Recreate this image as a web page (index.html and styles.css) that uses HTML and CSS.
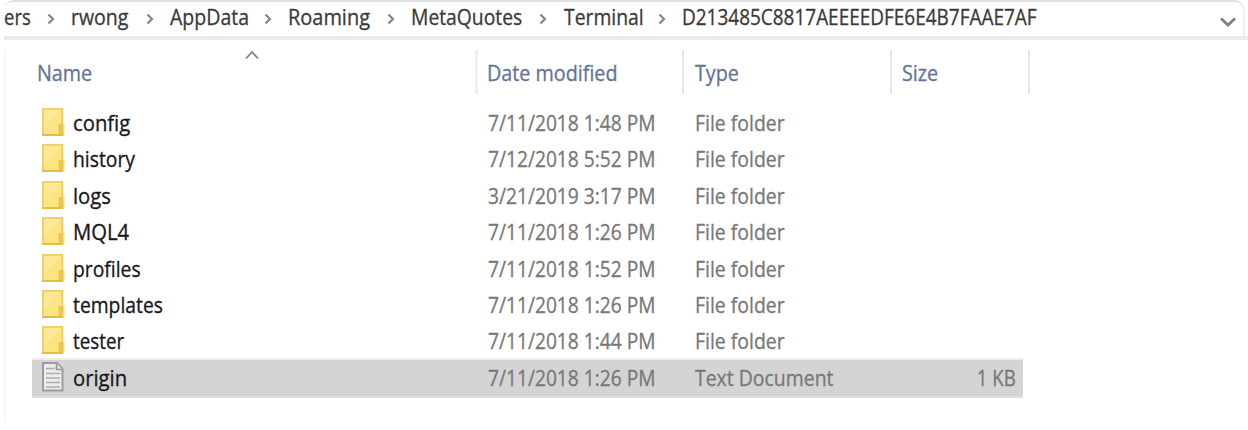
FILE: index.html
```
<!DOCTYPE html>
<html lang="en">
<head>
<meta charset="utf-8">
<title>File Explorer</title>
<link rel="stylesheet" href="styles.css">
</head>
<body>
<svg class="symbols" aria-hidden="true">
  <symbol id="sep" viewBox="0 0 8 12"><path d="M1.5 1.5L6 6L1.5 10.5" fill="none" stroke="#858585" stroke-width="2.2"/></symbol>
  <symbol id="folder" viewBox="0 0 23 28">
    <path d="M20 0h2v16h1v11h-3z" fill="#f8edc4"/>
    <rect x=".9" y=".9" width="19.2" height="26.2" fill="#fce482" stroke="#ecd06a" stroke-width="1.8"/>
    <path d="M2 2h17L2 20z" fill="#fff" opacity=".16"/>
    <rect x="16.5" y="16" width="5" height="12" fill="#e9c750"/>
    <path d="M0 27h21" stroke="#e5bd42" stroke-width="2"/>
  </symbol>
  <symbol id="doc" viewBox="0 0 22 30">
    <path d="M1 1h14l5.500 6v21.500H1z" fill="#ececec" stroke="#9c9c9c" stroke-width="2"/>
    <path d="M14.500 1v6.500h6" fill="#ddd" stroke="#969696" stroke-width="1.500"/>
    <path d="M4 6.500h9M4 11.500h14M4 16h14M4 20.500h14M4 25h14" stroke="#adadad" stroke-width="1.700"/>
  </symbol>
</svg>
<main class="explorer">
  <header class="address">
    <nav class="crumbs">
      <span class="crumb c1"><span class="fit">ers</span></span><svg class="sep"><use href="#sep"/></svg>
      <span class="crumb c2"><span class="fit">rwong</span></span><svg class="sep"><use href="#sep"/></svg>
      <span class="crumb c3"><span class="fit">AppData</span></span><svg class="sep"><use href="#sep"/></svg>
      <span class="crumb c4"><span class="fit">Roaming</span></span><svg class="sep"><use href="#sep"/></svg>
      <span class="crumb c5"><span class="fit">MetaQuotes</span></span><svg class="sep"><use href="#sep"/></svg>
      <span class="crumb c6"><span class="fit">Terminal</span></span><svg class="sep"><use href="#sep"/></svg>
      <span class="crumb c7"><span class="fit">D213485C8817AEEEEDFE6E4B7FAAE7AF</span></span>
    </nav>
    <svg class="drop" viewBox="0 0 18 12"><path d="M2 2.500L9 9L16 2.500" fill="none" stroke="#828282" stroke-width="3"/></svg>
  </header>
  <section class="listing">
    <div class="heads">
      <div class="head"><span class="fit">Name</span><svg class="sort" viewBox="0 0 14 10"><path d="M1 8.500L7 2L13 8.500" fill="none" stroke="#808080" stroke-width="1.800"/></svg></div>
      <div class="head"><span class="fit">Date modified</span></div>
      <div class="head"><span class="fit">Type</span></div>
      <div class="head"><span class="fit">Size</span></div>
    </div>
    <div class="rows">
      <div class="row"><svg class="icon"><use href="#folder"/></svg><span class="name broad"><span class="fit">config</span></span><span class="date"><span class="fit">7/11/2018 1:48 PM</span></span><span class="type"><span class="fit">File folder</span></span></div>
      <div class="row"><svg class="icon"><use href="#folder"/></svg><span class="name"><span class="fit">history</span></span><span class="date"><span class="fit">7/12/2018 5:52 PM</span></span><span class="type"><span class="fit">File folder</span></span></div>
      <div class="row"><svg class="icon"><use href="#folder"/></svg><span class="name broad"><span class="fit">logs</span></span><span class="date"><span class="fit">3/21/2019 3:17 PM</span></span><span class="type"><span class="fit">File folder</span></span></div>
      <div class="row"><svg class="icon"><use href="#folder"/></svg><span class="name broad"><span class="fit">MQL4</span></span><span class="date"><span class="fit">7/11/2018 1:26 PM</span></span><span class="type"><span class="fit">File folder</span></span></div>
      <div class="row"><svg class="icon"><use href="#folder"/></svg><span class="name"><span class="fit">profiles</span></span><span class="date"><span class="fit">7/11/2018 1:52 PM</span></span><span class="type"><span class="fit">File folder</span></span></div>
      <div class="row"><svg class="icon"><use href="#folder"/></svg><span class="name"><span class="fit">templates</span></span><span class="date"><span class="fit">7/11/2018 1:26 PM</span></span><span class="type"><span class="fit">File folder</span></span></div>
      <div class="row"><svg class="icon"><use href="#folder"/></svg><span class="name narrow"><span class="fit">tester</span></span><span class="date"><span class="fit">7/11/2018 1:44 PM</span></span><span class="type"><span class="fit">File folder</span></span></div>
      <div class="row selected"><svg class="icon doc"><use href="#doc"/></svg><span class="name broad"><span class="fit">origin</span></span><span class="date"><span class="fit">7/11/2018 1:26 PM</span></span><span class="type"><span class="fit">Text Document</span></span><span class="size"><span class="fit">1 KB</span></span></div>
    </div>
  </section>
</main>
</body>
</html>
```
FILE: styles.css
```
* { box-sizing: border-box; }
body { margin: 0; background: #fff; font: 21px/30px "Open Sans", "Noto Sans", sans-serif; -webkit-text-stroke: .3px currentColor; }
.symbols { display: block; width: 0; height: 0; }
.explorer { width: 1248px; height: 430px; overflow: hidden; padding-left: 4px; }
.fit { --fit: .89; display: inline-block; white-space: nowrap; transform: scaleX(var(--fit)); transform-origin: 0 50%; }

.address { display: flex; justify-content: space-between; width: 1241px; height: 36px; border-top: 2px solid #e0e0e0; border-right: 2px solid #f0f0f0; border-radius: 10px 10px 0 0; padding-right: 6px; }
.crumbs { display: flex; height: 32px; color: #3a3a3a; }
.crumb { flex: none; height: 32px; }
.sep { flex: none; width: 8px; height: 12px; margin-top: 11px; }
.c1 { width: 43px; padding-left: 0; }
.c2 { width: 91px; padding-left: 16px; }
.c3 { width: 110px; padding-left: 16px; }
.c4 { width: 115px; padding-left: 16px; }
.c5 { width: 144px; padding-left: 16px; }
.c6 { width: 111px; padding-left: 17px; }
.c7 { padding-left: 16px; }
.c1 .fit { --fit: .88; }
.c2 .fit { --fit: .93; }
.c3 .fit { --fit: .93; }
.c4 .fit { --fit: .95; }
.c5 .fit { --fit: .92; }
.c6 .fit { --fit: .92; }
.c7 .fit { --fit: .903; }
.drop { width: 18px; height: 12px; margin-top: 14px; }

.listing { height: 384px; border-top: 4px solid #ebebeb; }
.heads { display: grid; grid-template-columns: 474px 206px 208px 138px; height: 54px; margin-top: 10px; color: #63749a; }
.head { position: relative; border-right: 2px solid #e7e7e7; height: 44px; padding: 8px 0 0 10px; }
.head:nth-child(2) { padding-left: 9px; }
.head:nth-child(3) { padding-left: 11px; }
.head:first-child { padding-left: 33px; border-right-width: 3px; border-right-color: #f0f0f0; }
.head .fit { --fit: .94; }
.sort { position: absolute; left: 241px; top: 0; width: 14px; height: 10px; }
.rows { display: grid; grid-auto-rows: 36.4px; border-left: 2px solid #f6f6f6; margin-top: -54px; padding-top: 54px; height: 370px; }
.row { display: grid; grid-template-columns: 22px 1fr 207px 208px 120px; width: 991px; height: 39px; margin-left: 26px; padding: 0 0 0 10px; align-items: start; color: #787878; }
.icon { width: 23px; height: 28px; margin-top: 4px; }
.name { color: #17171d; padding: 4px 0 0 9px; }
.name .fit { --fit: .92; }
.broad .fit { --fit: .965; }
.narrow .fit { --fit: .895; }
.date, .type { padding-top: 4px; }
.date .fit { --fit: .913; }
.type .fit { --fit: .925; }
.size { padding: 4px 7px 0 0; text-align: right; }
.size .fit { transform-origin: 100% 50%; }
.selected { background: #d4d4d4; height: 40px; margin-top: -1px; border-top: 2px solid #ededed; border-bottom: 2px solid #dedede; }
.doc { width: 22px; height: 30px; margin-top: 2px; }
.selected .name, .selected .date, .selected .type, .selected .size { padding-top: 3px; }
```
